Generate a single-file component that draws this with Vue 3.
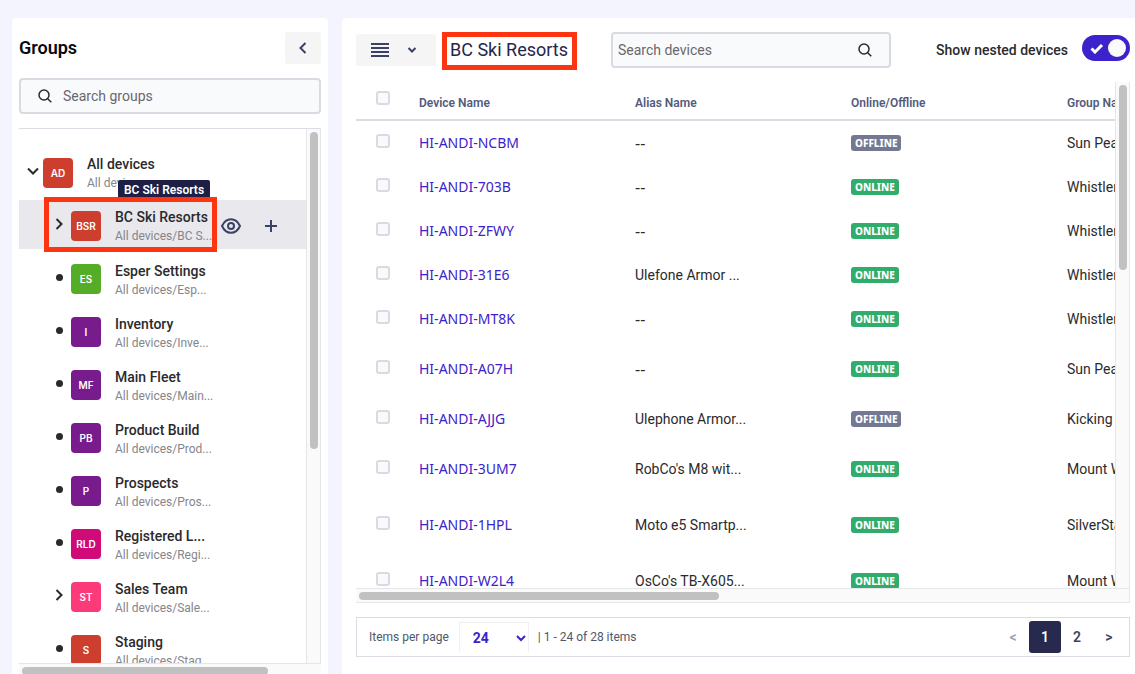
<script setup>
import { ref } from 'vue'

const groups = [
  { code: 'BSR', name: 'BC Ski Resorts', path: 'All devices/BC S...', color: '#cd3e2f', kind: 'closed', active: true },
  { code: 'ES', name: 'Esper Settings', path: 'All devices/Esp...', color: '#54ac27', kind: 'leaf' },
  { code: 'I', name: 'Inventory', path: 'All devices/Inve...', color: '#771b8d', kind: 'leaf' },
  { code: 'MF', name: 'Main Fleet', path: 'All devices/Main...', color: '#771b8d', kind: 'leaf' },
  { code: 'PB', name: 'Product Build', path: 'All devices/Prod...', color: '#771b8d', kind: 'leaf' },
  { code: 'P', name: 'Prospects', path: 'All devices/Pros...', color: '#771b8d', kind: 'leaf' },
  { code: 'RLD', name: 'Registered L...', path: 'All devices/Regi...', color: '#d10a7a', kind: 'leaf' },
  { code: 'ST', name: 'Sales Team', path: 'All devices/Sale...', color: '#fb3a7a', kind: 'closed' },
  { code: 'S', name: 'Staging', path: 'All devices/Stag...', color: '#cd3e2f', kind: 'leaf' },
]

const devices = [
  { name: 'HI-ANDI-NCBM', alias: '--', online: false, group: 'Sun Peaks' },
  { name: 'HI-ANDI-703B', alias: '--', online: true, group: 'Whistler' },
  { name: 'HI-ANDI-ZFWY', alias: '--', online: true, group: 'Whistler' },
  { name: 'HI-ANDI-31E6', alias: 'Ulefone Armor ...', online: true, group: 'Whistler' },
  { name: 'HI-ANDI-MT8K', alias: '--', online: true, group: 'Whistler' },
  { name: 'HI-ANDI-A07H', alias: '--', online: true, group: 'Sun Peaks', tall: true },
  { name: 'HI-ANDI-AJJG', alias: 'Ulephone Armor...', online: false, group: 'Kicking Horse' },
  { name: 'HI-ANDI-3UM7', alias: "RobCo's M8 wit...", online: true, group: 'Mount Washington', tall: true },
  { name: 'HI-ANDI-1HPL', alias: 'Moto e5 Smartp...', online: true, group: 'SilverStar', tall: true },
  { name: 'HI-ANDI-W2L4', alias: "OsCo's TB-X605...", online: true, group: 'Mount Washington', tall: true },
]

const nested = ref(true)
const groupQuery = ref('')
const deviceQuery = ref('')
</script>

<template>
  <div class="app">
    <aside class="panel groups">
      <header class="groups-head">
        <h2>Groups</h2>
        <button class="collapse" type="button" aria-label="Collapse groups">
          <svg width="10" height="14" viewBox="0 0 10 14"><path d="M7.5 2 2.5 7l5 5" /></svg>
        </button>
      </header>

      <label class="field">
        <svg class="lens" width="14" height="14" viewBox="0 0 14 14"><circle cx="6" cy="6" r="5" /><path d="m9.7 9.7 3.6 3.6" /></svg>
        <input v-model="groupQuery" type="text" placeholder="Search groups" aria-label="Search groups" />
      </label>

      <div class="scroll tree-scroll">
        <div class="view tree">
          <div class="row">
            <button class="twist" type="button" aria-label="Collapse All devices">
              <svg width="12" height="12" viewBox="0 0 12 12"><path d="m1 3.5 5 5 5-5" /></svg>
            </button>
            <span class="avatar root">AD</span>
            <div class="words">
              <div class="name">All devices</div>
              <div class="path">All devices</div>
            </div>
          </div>
          <div v-for="g in groups" :key="g.code" class="row child" :class="{ active: g.active }">
            <button v-if="g.kind === 'closed'" class="twist" type="button" :aria-label="'Expand ' + g.name">
              <svg width="12" height="12" viewBox="0 0 12 12"><path d="m3.5 1 5 5-5 5" /></svg>
            </button>
            <span v-else class="twist"><i class="dot"></i></span>
            <span class="avatar" :style="{ background: g.color }">{{ g.code }}</span>
            <div class="words">
              <div class="name">{{ g.name }}</div>
              <div class="path">{{ g.path }}</div>
            </div>
            <template v-if="g.active">
              <div class="actions">
                <button type="button" aria-label="View group">
                  <svg width="20" height="16" viewBox="0 0 20 16"><path d="M1 8c2-4.300 5.200-6.800 9-6.800S17 3.700 19 8c-2 4.300-5.200 6.800-9 6.800S3 12.300 1 8Z" /><circle cx="10" cy="8" r="3" /></svg>
                </button>
                <button type="button" aria-label="Add group">
                  <svg width="12" height="12" viewBox="0 0 12 12"><path d="M6 0v12M0 6h12" /></svg>
                </button>
              </div>
              <span class="tip" role="tooltip">BC Ski Resorts</span>
              <span class="ring"></span>
            </template>
          </div>
        </div>
        <div class="track-v"><div class="thumb tree-v"></div></div>
        <div class="track-h"><div class="thumb tree-h"></div></div>
      </div>
    </aside>

    <main class="panel devices">
      <header class="bar">
        <button class="density" type="button" aria-label="List density">
          <svg width="18" height="14" viewBox="0 0 18 14"><path d="M0 1h18M0 5h18M0 9h18M0 13h18" /></svg>
          <svg width="10" height="8" viewBox="0 0 10 8"><path d="m1.500 2 3.500 3.500L8.500 2" /></svg>
        </button>
        <h1>BC Ski Resorts<span class="ring"></span></h1>
        <label class="field device-field">
          <input v-model="deviceQuery" type="text" placeholder="Search devices" aria-label="Search devices" />
          <svg class="lens" width="14" height="14" viewBox="0 0 14 14"><circle cx="6" cy="6" r="5" /><path d="m9.700 9.700 3.600 3.600" /></svg>
        </label>
        <label class="nested">
          <span>Show nested devices</span>
          <span class="switch">
            <input v-model="nested" type="checkbox" />
            <svg width="14" height="11" viewBox="0 0 14 11"><path d="m1.500 5.500 3.500 3.500 7-7" /></svg>
            <i></i>
          </span>
        </label>
      </header>

      <div class="scroll table-scroll">
        <div class="view">
          <table>
            <colgroup><col class="c-pick" /><col class="c" /><col class="c" /><col class="c" /><col class="c" /></colgroup>
            <thead>
              <tr>
                <th><input type="checkbox" aria-label="Select all devices" /></th>
                <th>Device Name</th>
                <th>Alias Name</th>
                <th>Online/Offline</th>
                <th>Group Name</th>
              </tr>
            </thead>
            <tbody>
              <tr v-for="d in devices" :key="d.name" :class="{ tall: d.tall }">
                <td><input type="checkbox" :aria-label="'Select ' + d.name" /></td>
                <td><a href="#">{{ d.name }}</a></td>
                <td :class="{ none: d.alias === '--' }">{{ d.alias }}</td>
                <td><span class="badge" :class="{ off: !d.online }">{{ d.online ? 'ONLINE' : 'OFFLINE' }}</span></td>
                <td>{{ d.group }}</td>
              </tr>
            </tbody>
          </table>
        </div>
        <div class="track-v"><div class="thumb table-v"></div></div>
        <div class="track-h"><div class="thumb table-h"></div></div>
      </div>

      <footer class="pager">
        <label for="per-page">Items per page</label>
        <span class="per-page">
          <select id="per-page"><option>24</option><option>48</option></select>
          <svg width="10" height="8" viewBox="0 0 10 8"><path d="m1 2 4 4 4-4" /></svg>
        </span>
        <span class="count">| 1 - 24 of 28 items</span>
        <nav>
          <button type="button" class="prev" aria-label="Previous page">&lt;</button>
          <button type="button" class="current">1</button>
          <button type="button">2</button>
          <button type="button" aria-label="Next page">&gt;</button>
        </nav>
      </footer>
    </main>
  </div>
</template>

<style>
body {
  margin: 0;
  background: #f4f4fe;
}
</style>

<style scoped>
* { box-sizing: border-box; }
.app {
  display: grid;
  grid-template-columns: 316px minmax(0, 1fr);
  gap: 14px;
  height: 100vh;
  padding: 18px 0 0 12px;
  overflow: hidden;
  font-family: Roboto, "Noto Sans", sans-serif;
  font-size: 14px;
  color: #2a2a2c;
}
button, input, select { font: inherit; color: inherit; margin: 0; }
button { border: 0; padding: 0; background: none; display: flex; align-items: center; justify-content: center; cursor: pointer; }
svg { fill: none; stroke: currentColor; stroke-width: 2; flex: none; }
h1, h2 { margin: 0; }
.panel {
  display: flex;
  flex-direction: column;
  min-height: 0;
  background: #fff;
  border-radius: 4px 4px 0 0;
}
.groups { padding: 14px 7px 0; }
.groups-head { display: flex; justify-content: space-between; align-items: center; }
h2 { font-size: 18px; font-weight: 600; line-height: 24px; color: #0a0a0c; }
.collapse { width: 36px; height: 32px; background: #f5f5f6; border-radius: 3px; color: #3c4166; }

.field {
  display: flex;
  align-items: center;
  height: 36px;
  flex: none;
  border: 2px solid #dadae3;
  border-radius: 4px;
  background: #f9fafc;
}
.field input { flex: 1; min-width: 0; border: 0; outline: 0; padding: 0; background: none; }
.field input::placeholder { color: #68686c; opacity: 1; }
.lens { stroke-width: 1.5; }
.groups .field { margin: 14px 0; padding: 0 18px 0 17px; gap: 11px; }

.scroll {
  display: grid;
  grid-template-columns: minmax(0, 1fr) 15px;
  flex: 1;
  min-height: 0;
  background: #fafafa;
}
.tree-scroll { grid-template-rows: minmax(0, 1fr) 11px; border-top: 1px solid #dadde4; }
.table-scroll { grid-template-rows: minmax(0, 1fr) 15px; }
.view { overflow: hidden; background: #fff; }
.track-v { border: 1px solid #e6e6e8; border-width: 0 1px; padding: 3px 2px 3px 3px; }
.track-h { grid-column: 1 / -1; border-top: 1px solid #e6e6e8; padding: 3px; }
.table-scroll .track-h { border-bottom: 1px solid #e6e6e8; border-right: 1px solid #e6e6e8; }
.thumb { background: #c1c1c1; border-radius: 4px; }
.track-h .thumb { height: 8px; }
.tree-v { height: 60%; }
.tree-h { width: 83%; }
.table-v { height: 37%; }
.table-h { width: 47%; }

.tree { display: flex; flex-direction: column; gap: 4px; padding-top: 18px; }
.row { position: relative; display: flex; align-items: center; flex: none; height: 49px; padding: 2px 0 0 4px; }
.child { padding-left: 30px; }
.child .avatar { margin-left: 2px; }
.active { background: #e9e8ed; }
.twist { width: 20px; height: 20px; display: flex; align-items: center; justify-content: center; padding-bottom: 4px; }
span.twist { padding-bottom: 2px; }
.dot { width: 7px; height: 7px; border-radius: 50%; background: #2a2a2c; }
.avatar {
  width: 30px;
  height: 30px;
  border-radius: 4px;
  display: flex;
  align-items: center;
  justify-content: center;
  color: #fff;
  font-family: Inter, "Liberation Sans", sans-serif;
  font-size: 10px;
  font-weight: 600;
}
.root { background: #cd3e2f; }
.words { margin: 2px 0 0 14px; white-space: nowrap; }
.child:not(.active) .words { margin-top: 4px; }
.name { font-weight: 500; line-height: 18px; }
.path { font-size: 12px; line-height: 20px; color: #85858c; }
.actions { position: absolute; left: 202px; top: 16px; display: flex; gap: 20px; color: #3c4166; }
.actions button { width: 20px; height: 20px; }
.tip {
  position: absolute;
  left: 99px;
  top: -20px;
  padding: 0 6px;
  border-radius: 2px;
  background: #1d1f45;
  color: #fff;
  font-size: 12px;
  font-weight: 600;
  line-height: 20px;
  white-space: nowrap;
}
.ring { position: absolute; border: 5px solid #fc3510; }
.row .ring { left: 25px; top: -3px; width: 173px; height: 55px; }

.devices { padding: 14px 5px 17px 14px; border-top-right-radius: 0; }
.bar { display: flex; align-items: center; flex: none; height: 36px; margin-bottom: 14px; }
.density { width: 80px; height: 32px; gap: 18px; padding-right: 4px; background: #f5f5f6; border-radius: 3px; color: #3c4166; }
h1 { position: relative; margin: 0 35px 0 14px; min-width: 118px; color: #24264d; font-size: 18px; font-weight: 400; line-height: 24px; white-space: nowrap; }
h1 .ring { inset: -6px -9px -8px -8px; }
.device-field { width: 280px; margin-left: 8px; padding: 0 17px 0 5px; }
.nested { display: flex; align-items: center; gap: 14px; margin-left: auto; font-weight: 500; white-space: nowrap; }
.switch { position: relative; display: flex; width: 48px; height: 26px; align-items: center; justify-content: space-between; padding: 0 4px 0 8px; border-radius: 13px; background: #3c22cb; color: #fff; margin-bottom: 4px; }
.switch input { position: absolute; inset: 0; width: 100%; height: 100%; opacity: 0; }
.switch svg { stroke-width: 3; }
.switch i { width: 18px; height: 18px; border-radius: 50%; background: #fafafa; }

table { width: 911px; table-layout: fixed; border-collapse: separate; border-spacing: 0; }
.c-pick { width: 47px; }
.c { width: 216px; }
th, td { padding: 0 16px; text-align: left; white-space: nowrap; }
th:first-child, td:first-child { padding: 0 0 4px 20px; }
th { height: 39px; padding-top: 4px; border-bottom: 2px solid #dadae3; color: #535a7c; font-size: 12px; font-weight: 600; }
th:first-child { padding-bottom: 5px; }
td { height: 44px; }
.tall td { height: 56px; }
td input, th input { appearance: none; display: block; width: 14px; height: 14px; border: 2px solid #dadae3; border-radius: 3px; background: #f9fafc; }
a { color: #3c22cb; text-decoration: none; }
a, .none { font-family: "Noto Sans", sans-serif; font-size: 14px; line-height: 16px; }
.none { font-size: 16px; }
.badge { display: block; width: fit-content; padding: 0 4px; border-radius: 3px; background: #30ac6c; color: #fff; font-family: "Noto Sans", sans-serif; font-size: 10px; font-weight: 800; line-height: 16px; }
.off { background: #737893; }

.pager { display: flex; align-items: center; flex: none; height: 40px; margin-top: 14px; padding: 0 4px 0 12px; border: 1px solid #dadde4; color: #50586a; font-size: 12px; }
.per-page { position: relative; display: flex; align-items: center; width: 70px; height: 30px; margin: 0 9px 0 10px; border: 1px solid #f0f0f2; border-bottom: 0; color: #3c22cb; }
.per-page select { width: 100%; height: 100%; padding: 0 0 0 13px; appearance: none; border: 0; background: none; font-size: 14px; font-weight: 700; }
.per-page svg { position: absolute; right: 2px; pointer-events: none; }
nav { display: flex; margin-left: auto; }
nav button { width: 32px; height: 32px; border-radius: 3px; color: #3c4166; font-size: 14px; font-weight: 600; }
nav .current { background: #28294e; color: #fff; }
nav .prev { color: #a0a3b4; }
</style>
